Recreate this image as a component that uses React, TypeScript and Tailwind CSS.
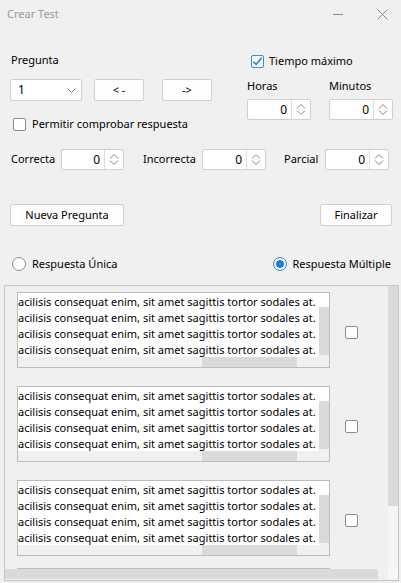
import type { ReactNode } from 'react'

const LINE = 'acilisis consequat enim, sit amet sagittis tortor sodales at.'

function SpinIcon() {
  return (
    <svg width="10" height="13" viewBox="0 0 10 13" fill="none" stroke="#858585" strokeWidth="1">
      <path d="M1 5.5 L5 1.5 L9 5.5" />
      <path d="M1 7.5 L5 11.5 L9 7.5" />
    </svg>
  )
}

function SpinBox({ width }: { width: string }) {
  return (
    <div className={`flex h-[21px] ${width} rounded-[2px] border border-[#cfcfcf] bg-white`}>
      <div className="flex flex-1 items-center justify-end pr-[4px] text-[12px]">0</div>
      <div className="flex w-[19px] items-center justify-center border-l border-[#dcdcdc]">
        <SpinIcon />
      </div>
    </div>
  )
}

function Check({ checked = false, className = '' }: { checked?: boolean; className?: string }) {
  if (checked) {
    return (
      <div className={`flex h-[13px] w-[13px] items-center justify-center rounded-[2px] border border-[#3d8ad8] bg-[#f4f9ff] ${className}`}>
        <svg width="11" height="11" viewBox="0 0 11 11" fill="none" stroke="#2f7fd6" strokeWidth="1.6">
          <path d="M1.5 5.8 L4.2 8.4 L9.6 1.8" />
        </svg>
      </div>
    )
  }
  return <div className={`h-[13px] w-[13px] rounded-[2px] border border-[#8c8c8c] bg-white ${className}`} />
}

function Radio({ checked = false }: { checked?: boolean }) {
  if (checked) {
    return (
      <div className="flex h-[14px] w-[14px] items-center justify-center rounded-full border border-[#2b7bd6] bg-white">
        <div className="h-[8px] w-[8px] rounded-full bg-[#2b7bd6]" />
      </div>
    )
  }
  return <div className="h-[14px] w-[14px] rounded-full border border-[#8c8c8c] bg-white" />
}

function Btn({ width, children }: { width: string; children: ReactNode }) {
  return (
    <div className={`flex h-[22px] ${width} items-center justify-center rounded-[2px] border border-[#d0d0d0] bg-[#fdfdfd]`}>
      {children}
    </div>
  )
}

function AnswerBox() {
  return (
    <div className="flex items-center">
      <div className="flex h-[76px] w-[313px] shrink-0 flex-col border border-[#bdbdbd]">
        <div className="flex h-[64px]">
          <div className="w-[301px] overflow-hidden whitespace-nowrap bg-white pt-[1px] leading-[16px] text-black">
            <div>{LINE}</div>
            <div>{LINE}</div>
            <div>{LINE}</div>
            <div>{LINE}</div>
          </div>
          <div className="flex w-[10px] flex-col">
            <div className="h-[14px] bg-white" />
            <div className="h-[48px] bg-[#dadada]" />
            <div className="flex-1 bg-[#f0f0f0]" />
          </div>
        </div>
        <div className="flex h-[10px] bg-[#f0f0f0]">
          <div className="ml-[184px] w-[95px] bg-[#dadada]" />
        </div>
      </div>
      <Check className="ml-[15px] mt-[4px]" />
    </div>
  )
}

export default function App() {
  return (
    <div className="h-[583px] w-[401px] overflow-hidden bg-[#f0f0f0] font-['Noto_Sans',sans-serif] text-[11px] text-black">
      {/* title bar */}
      <div className="flex h-[28px] items-center">
        <span className="ml-[7px] text-[#9a9a9a]">Crear Test</span>
        <div className="ml-auto mr-[13px] flex items-center gap-[34px]">
          <div className="h-px w-[10px] bg-[#8a8a8a]" />
          <svg width="11" height="11" viewBox="0 0 11 11" stroke="#8a8a8a" strokeWidth="1">
            <path d="M0.5 0.5 L10.5 10.5 M10.5 0.5 L0.5 10.5" />
          </svg>
        </div>
      </div>

      {/* top section */}
      <div className="mt-[22px] flex h-[81px]">
        <div className="ml-[10px] flex w-[202px] flex-col">
          <div className="flex h-[20px] items-center pl-[1px]">Pregunta</div>
          <div className="mt-[9px] flex h-[22px]">
            <div className="flex w-[72px] items-center rounded-[2px] border border-[#cfcfcf] bg-white pl-[7px] pr-[5px]">
              <span className="text-[12px]">1</span>
              <svg className="ml-auto" width="9" height="5" viewBox="0 0 9 5" fill="none" stroke="#7a7a7a" strokeWidth="1">
                <path d="M0.5 0.5 L4.5 4.5 L8.5 0.5" />
              </svg>
            </div>
            <div className="ml-[12px]">
              <Btn width="w-[50px]">{'< -'}</Btn>
            </div>
            <div className="ml-[18px]">
              <Btn width="w-[50px]">{'->'}</Btn>
            </div>
          </div>
          <div className="mt-[16px] flex h-[14px] items-center pl-[3px]">
            <Check />
            <span className="ml-[6px]">Permitir comprobar respuesta</span>
          </div>
        </div>

        <div className="ml-[35px] flex flex-col">
          <div className="flex h-[22px] items-center pl-[4px]">
            <Check checked />
            <span className="ml-[5px]">Tiempo máximo</span>
          </div>
          <div className="mt-[6px] flex h-[16px] items-center">
            <span className="w-[82px]">Horas</span>
            <span>Minutos</span>
          </div>
          <div className="mt-[5px] flex gap-[18px]">
            <SpinBox width="w-[64px]" />
            <SpinBox width="w-[64px]" />
          </div>
        </div>
      </div>

      {/* points row */}
      <div className="mt-[18px] flex h-[21px] items-center pl-[11px]">
        <span className="w-[50px]">Correcta</span>
        <SpinBox width="w-[63px]" />
        <span className="ml-[19px] w-[59px]">Incorrecta</span>
        <SpinBox width="w-[64px]" />
        <span className="ml-[18px] w-[41px]">Parcial</span>
        <SpinBox width="w-[64px]" />
      </div>

      {/* buttons */}
      <div className="mt-[34px] flex justify-between pl-[10px] pr-[9px]">
        <Btn width="w-[114px]">Nueva Pregunta</Btn>
        <Btn width="w-[72px]">Finalizar</Btn>
      </div>

      {/* answer type */}
      <div className="mt-[31px] flex h-[14px] items-center">
        <div className="ml-[12px] flex items-center">
          <Radio />
          <span className="ml-[6px]">Respuesta Única</span>
        </div>
        <div className="ml-auto mr-[10px] flex items-center">
          <Radio checked />
          <span className="ml-[5px]">Respuesta Múltiple</span>
        </div>
      </div>

      {/* answers scroll area */}
      <div className="ml-[4px] mt-[14px] flex h-[296px] w-[395px] flex-col border border-[#c6c6c6]">
        <div className="flex h-[283px]">
          <div className="flex-1 overflow-hidden pl-[12px] pt-[6px]">
            <AnswerBox />
            <div className="mt-[18px]">
              <AnswerBox />
            </div>
            <div className="mt-[18px]">
              <AnswerBox />
            </div>
            {/* next answer, scrolled out of view except for its top edge */}
            <div className="mt-[12px] h-[4px] w-[313px] border-x border-t border-[#bdbdbd] bg-white" />
          </div>
          <div className="flex w-[10px] flex-col">
            <div className="h-[220px] bg-[#dadada]" />
            <div className="flex-1 bg-[#f5f5f5]" />
          </div>
        </div>
        <div className="flex h-[10px]">
          <div className="w-[373px] bg-[#dadada]" />
          <div className="flex-1 bg-[#f0f0f0]" />
          <div className="w-[10px] bg-[#f7f7f7]" />
        </div>
      </div>
    </div>
  )
}
